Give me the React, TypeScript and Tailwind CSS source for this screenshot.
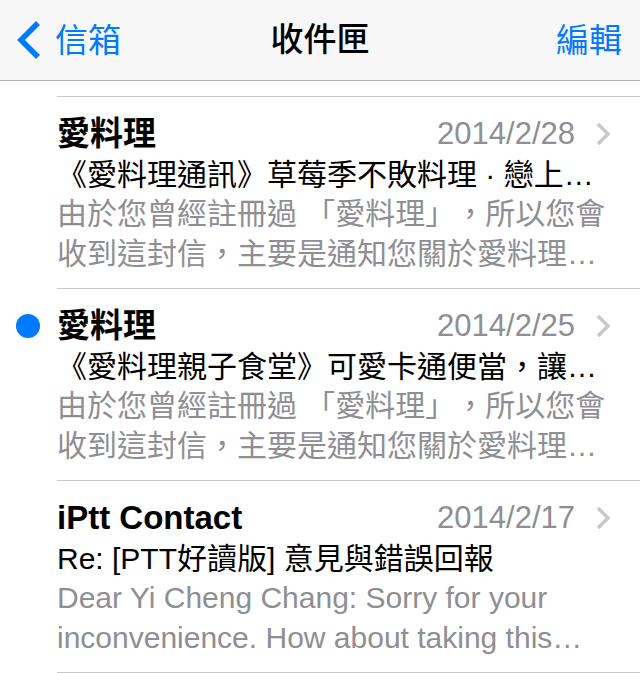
const font = "font-['Liberation_Sans','Noto_Sans_CJK_TC',sans-serif] [text-spacing-trim:space-all]";

interface Mail {
  sender: string;
  date: string;
  subject: string;
  preview: string;
  unread?: boolean;
}

const mails: Mail[] = [
  {
    sender: '愛料理',
    date: '2014/2/28',
    subject: '《愛料理通訊》草莓季不敗料理 · 戀上草莓的甜蜜滋味',
    preview: '由於您曾經註冊過 「愛料理」，所以您會收到這封信，主要是通知您關於愛料理的最新消息',
  },
  {
    sender: '愛料理',
    date: '2014/2/25',
    subject: '《愛料理親子食堂》可愛卡通便當，讓孩子開心吃光光',
    preview: '由於您曾經註冊過 「愛料理」，所以您會收到這封信，主要是通知您關於愛料理的最新消息',
    unread: true,
  },
  {
    sender: 'iPtt Contact',
    date: '2014/2/17',
    subject: 'Re: [PTT好讀版] 意見與錯誤回報',
    preview: 'Dear Yi Cheng Chang: Sorry for your inconvenience. How about taking this screenshot again',
  },
];

function Chevron() {
  return (
    <svg width="14" height="24" viewBox="0 0 14 24" className="shrink-0">
      <path d="M2 2 L12 12 L2 22" fill="none" stroke="#c7c7cc" strokeWidth="3.5" />
    </svg>
  );
}

function MailRow({ mail }: { mail: Mail }) {
  return (
    <div className="relative h-[192px]">
      {mail.unread && (
        <div className="absolute left-[16px] top-[25px] w-[24px] h-[24px] rounded-full bg-[#007aff]" />
      )}
      <div className="pl-[57px] pr-[30px] pt-[17px]">
        <div className="flex items-center h-[40px]">
          <div className="flex-1 text-[33px] font-bold text-black truncate">{mail.sender}</div>
          <div className="text-[31px] text-[#8e8e93] mr-[21px]">{mail.date}</div>
          <Chevron />
        </div>
        <div className="mt-[1px] h-[40px] leading-[40px] text-[30px] text-black truncate">{mail.subject}</div>
        <div className="mt-[-1px] leading-[40px] text-[30px] text-[#8e8e93] line-clamp-2">{mail.preview}</div>
      </div>
      <div className="absolute bottom-0 left-[57px] right-0 h-px bg-[#c8c7cc]" />
    </div>
  );
}

export default function App() {
  return (
    <div className={`w-[640px] h-[673px] overflow-hidden bg-white ${font}`}>
      <div className="relative h-[81px] bg-[#f7f7f7] border-b border-[#b2b2b2] flex items-center justify-between pl-[17px] pr-[18px]">
        <div className="flex items-center gap-[14px] text-[#007aff]">
          <svg width="24" height="40" viewBox="0 0 24 40">
            <path d="M21 3 L4 20 L21 37" fill="none" stroke="#007aff" strokeWidth="5.5" />
          </svg>
          <span className="text-[33px] leading-none">信箱</span>
        </div>
        <div className="absolute left-0 right-0 text-center text-[33px] font-medium text-black pointer-events-none">收件匣</div>
        <span className="text-[33px] leading-none text-[#007aff]">編輯</span>
      </div>
      <div className="pt-[15px]">
        <div className="ml-[57px] h-px bg-[#c8c7cc]" />
        {mails.map((m, i) => (
          <MailRow key={i} mail={m} />
        ))}
      </div>
    </div>
  );
}
